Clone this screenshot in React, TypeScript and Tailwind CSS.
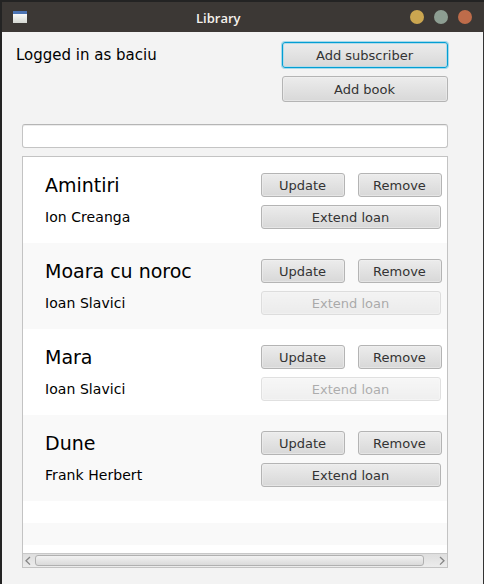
import React from "react";
import clsx from "clsx";

const books = [
  { title: "Amintiri", author: "Ion Creanga", onLoan: true },
  { title: "Moara cu noroc", author: "Ioan Slavici", onLoan: false },
  { title: "Mara", author: "Ioan Slavici", onLoan: false },
  { title: "Dune", author: "Frank Herbert", onLoan: true },
];

type ButtonProps = {
  children: React.ReactNode;
  className?: string;
  disabled?: boolean;
  focused?: boolean;
};

function Button({ children, className, disabled, focused }: ButtonProps) {
  return (
    <button
      disabled={disabled}
      className={clsx(
        "flex shrink-0 items-center justify-center rounded-[3px] border bg-linear-to-b from-[#ececec] to-[#d8d8d8] pt-0.5 pr-px text-[13px] leading-4 text-[#333333]",
        focused
          ? "border-[#039ed3] shadow-[0_0_0_1px_#a5d9ea,inset_0_0_0_1px_#b4dbe8]"
          : "border-[#b4b4b4] shadow-[inset_0_0_0_1px_#f1f1f180]",
        disabled && "opacity-40",
        className,
      )}
    >
      {children}
    </button>
  );
}

function TitleBar() {
  return (
    <header className="flex h-[30px] shrink-0 items-center bg-[#3c3835]">
      <div className="ml-[11px] h-3 w-[14px] border-t-[3px] border-[#4c74b4] bg-linear-to-b from-[#fafafa] to-[#d5d8d2]" />
      <h1 className="ml-[169px] flex-1 pt-0.5 font-['Open_Sans',sans-serif] text-[13px] font-semibold leading-4 text-[#f4f1ec]">
        Library
      </h1>
      <div className="mr-3 flex gap-[10px]">
        <span className="size-[14px] rounded-full bg-[#cba650]" />
        <span className="size-[14px] rounded-full bg-[#8d9e92]" />
        <span className="size-[14px] rounded-full bg-[#be6c4a]" />
      </div>
    </header>
  );
}

function ScrollBar() {
  return (
    <div className="flex h-[14px] shrink-0 items-center border-t border-[#c8c8c8] bg-linear-to-b from-[#dedede] to-[#ececec]">
      <svg width="12" height="13" viewBox="0 0 12 13" fill="none" stroke="#858585" strokeWidth="1.3">
        <path d="M7 3 L3 6.8 L7 10.6" />
      </svg>
      <div className="h-[11px] w-[389px] rounded-[3px] border border-[#b0b0b0] bg-linear-to-b from-[#f2f2f2] to-[#dadada]" />
      <svg className="ml-auto" width="12" height="13" viewBox="0 0 12 13" fill="none" stroke="#858585" strokeWidth="1.3">
        <path d="M5 3 L9 6.8 L5 10.6" />
      </svg>
    </div>
  );
}

export default function App() {
  return (
    <div className="h-[584px] w-[484px] overflow-hidden bg-[#232323] pt-0.5 pl-0.5 font-['DejaVu_Sans',sans-serif] text-black">
      <div className="flex h-full flex-col">
        <TitleBar />
        <main className="flex-1 border-r border-[#333333] bg-[#f3f3f3] pt-[10px]">
          <div className="flex justify-between pr-[35px] pl-[14px]">
            <p className="pt-[3px] text-[15px] leading-5">Logged in as baciu</p>
            <div className="flex w-[166px] flex-col gap-2">
              <Button focused className="h-[26px]">Add subscriber</Button>
              <Button className="h-[26px]">Add book</Button>
            </div>
          </div>
          <input
            aria-label="Search"
            className="mt-[22px] ml-5 block h-6 w-[426px] rounded-[3px] border border-[#c4c4c4] border-t-[#b5b5b5] bg-white px-2 text-[13px] shadow-[inset_0_1px_0_#ececec] outline-none"
          />
          <section className="mt-2 ml-5 flex h-[412px] w-[426px] flex-col border border-[#c3c3c3] bg-white">
            <ul>
              {books.map((book) => (
                <li key={book.title} className="flex h-[86px] pt-4 pl-[22px] odd:bg-white even:bg-[#f9f9f9]">
                  <div className="w-[216px] whitespace-nowrap">
                    <h2 className="text-[19px] leading-6">{book.title}</h2>
                    <p className="mt-2 text-[14px] leading-6 tracking-[0.06px]">{book.author}</p>
                  </div>
                  <div className="flex flex-col gap-2">
                    <div className="flex gap-[13px]">
                      <Button className="h-6 w-[84px]">Update</Button>
                      <Button className="h-6 w-[84px]">Remove</Button>
                    </div>
                    <Button disabled={!book.onLoan} className="h-6 w-[180px]">
                      Extend loan
                    </Button>
                  </div>
                </li>
              ))}
            </ul>
            <div className="h-[22px]" />
            <div className="h-[22px] bg-[#f9f9f9]" />
            <div className="flex-1" />
            <ScrollBar />
          </section>
        </main>
      </div>
    </div>
  );
}
